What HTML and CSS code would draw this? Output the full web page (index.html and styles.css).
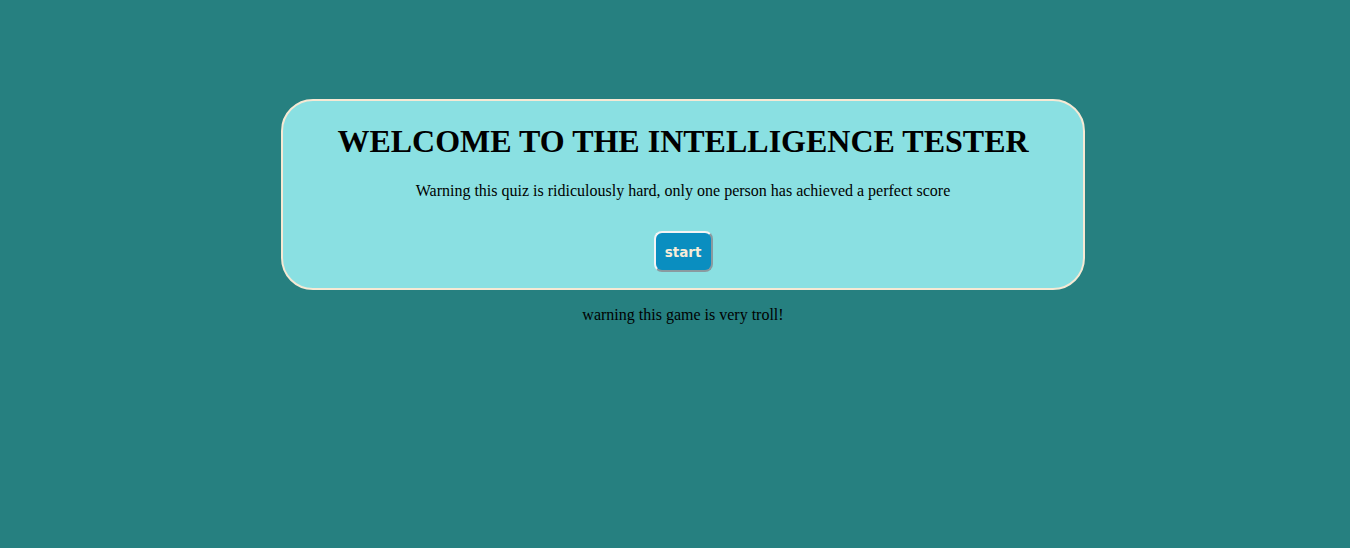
FILE: index.html
```html
<!DOCTYPE html>
<html>
<head>
<meta charset="utf-8">
<link rel="stylesheet" href="styles.css">
</head>
<body>
<main class="page">
  <section class="card">
    <h1 class="title">WELCOME TO THE INTELLIGENCE TESTER</h1>
    <p class="warning">Warning this quiz is ridiculously hard, only one person has achieved a perfect score</p>
    <button class="start">start</button>
  </section>
  <p class="troll">warning this game is very troll!</p>
</main>
</body>
</html>
```
FILE: styles.css
```css
html, body {
  margin: 0;
  padding: 0;
}
body {
  background: #268080;
  font-family: "Liberation Serif", "Times New Roman", serif;
  color: #000;
  height: 548px;
  overflow: hidden;
}
.page {
  display: flex;
  flex-direction: column;
  align-items: center;
  padding: 99px 0 0 16px;
}
.card {
  box-sizing: border-box;
  width: 804px;
  height: 191px;
  background: #8ae0e2;
  border: 2px solid #f6e9d4;
  border-radius: 32px;
  display: flex;
  flex-direction: column;
  align-items: center;
  padding-top: 22px;
}
.title {
  margin: 0;
  font-size: 32px;
  font-weight: bold;
  line-height: 37px;
}
.warning {
  margin: 22px 0 0;
  font-size: 16px;
  line-height: 18px;
}
.start {
  margin-top: 31px;
  width: 59px;
  height: 41px;
  background: #0a8ec0;
  color: #f7ecd8;
  font-family: "DejaVu Sans", Verdana, sans-serif;
  font-weight: bold;
  font-size: 13.5px;
  border: 2px solid #f4f4f4;
  border-right-color: #8a9aa0;
  border-bottom-color: #8a9aa0;
  border-radius: 8px;
  padding: 0;
}
.troll {
  margin: 16px 0 0;
  font-size: 16px;
  line-height: 18px;
}
```
